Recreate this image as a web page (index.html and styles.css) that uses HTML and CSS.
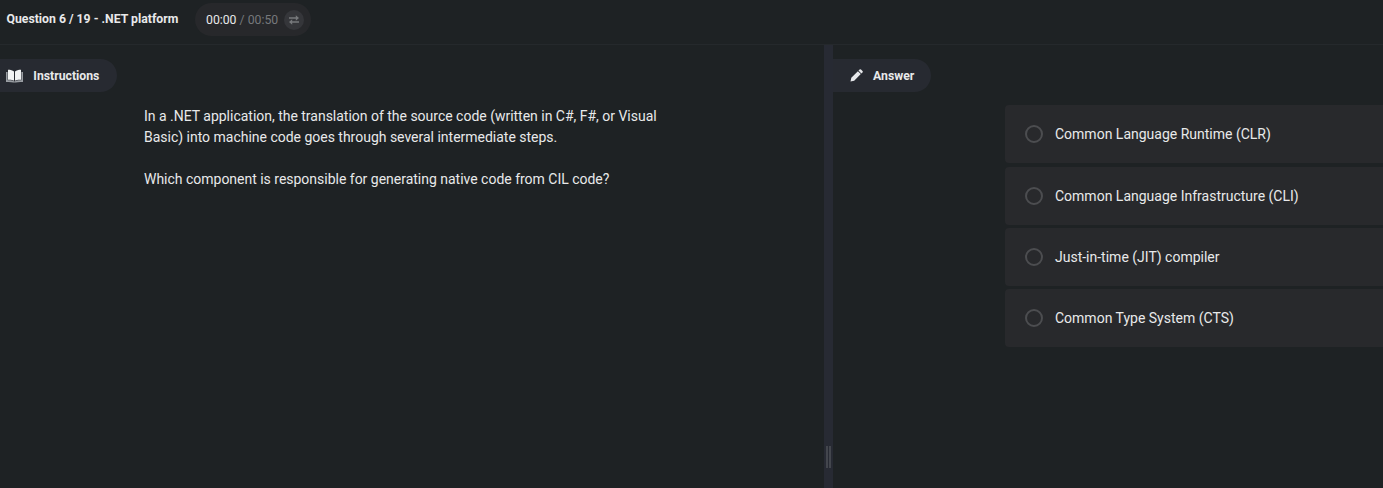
FILE: index.html
```html
<!DOCTYPE html>
<html lang="en">
<head>
<meta charset="utf-8">
<title>.NET platform</title>
<link rel="stylesheet" href="styles.css">
</head>
<body>
<header class="topbar">
  <h1 class="title">Question 6 / 19 - .NET platform</h1>
  <div class="timer">
    <span class="elapsed">00:00</span><span class="total">&nbsp;/ 00:50</span>
    <span class="swap">
      <svg width="10" height="10" viewBox="0 0 10 10" fill="#77797c"><path d="M0 2.300h6.800V.3L10 3 6.800 5.700V3.700H0zM10 6.300H3.200V4.300L0 7l3.200 2.700V7.700H10z"/></svg>
    </span>
  </div>
</header>
<main class="workspace">
  <section class="instructions">
    <div class="tab">
      <svg class="book" width="17" height="14" viewBox="0 0 17 14"><path fill="#9a9ea3" d="M0 3h1.600v8.200c2.600-.2 4.800.1 6.900 1.300 2.100-1.200 4.300-1.500 6.900-1.300V3H17v10c-3-.2-5.500-.1-7.300.5H7.300C5.500 12.900 3 12.800 0 13z"/><path fill="#f1f2f3" d="M2 .800C4.700.800 6.500 1.300 8 2.500v9.300C6.300 10.700 4.500 10.500 2 10.700zM15 .800C12.300.800 10.500 1.300 9 2.500v9.300c1.700-1.100 3.500-1.300 6-1.100z"/></svg>
      <span>Instructions</span>
    </div>
    <div class="prose">
      <p>In a .NET application, the translation of the source code (written in C#, F#, or Visual Basic) into machine code goes through several intermediate steps.</p>
      <p>Which component is responsible for generating native code from CIL code?</p>
    </div>
  </section>
  <div class="splitter"><span class="grip"></span></div>
  <section class="answer">
    <div class="tab">
      <svg class="pencil" width="13" height="13" viewBox="0 0 13 13" fill="#e6e8eb"><path d="M.5 12.600 1.300 8.800 7.900 2.200l2.900 2.900-6.600 6.600zM8.500 1.600 9.600.500q.7-.6 1.400 0l1.500 1.500q.6.700 0 1.400l-1.100 1.100z"/></svg>
      <span>Answer</span>
    </div>
    <div class="options">
      <label class="option"><span class="radio"></span>Common Language Runtime (CLR)</label>
      <label class="option"><span class="radio"></span>Common Language Infrastructure (CLI)</label>
      <label class="option"><span class="radio"></span>Just-in-time (JIT) compiler</label>
      <label class="option"><span class="radio"></span>Common Type System (CTS)</label>
    </div>
  </section>
</main>
</body>
</html>
```
FILE: styles.css
```css
* { box-sizing: border-box; }
body {
  margin: 0;
  height: 488px;
  display: flex;
  flex-direction: column;
  overflow: hidden;
  background: #1e2224;
  color: #e8e9ea;
  font-family: Roboto, "Liberation Sans", sans-serif;
  font-size: 14px;
}
.topbar {
  height: 45px;
  flex: none;
  display: flex;
  align-items: flex-start;
  padding-left: 6.500px;
  border-bottom: 1px solid #25292c;
}
.title {
  margin: 10px 0 0;
  width: 188.500px;
  font-size: 12.250px;
  line-height: 18px;
  font-weight: 700;
  white-space: nowrap;
}
.timer {
  display: flex;
  align-items: center;
  width: 116px;
  height: 33px;
  margin-top: 3px;
  padding-left: 11px;
  border-radius: 17px;
  background: #27282b;
  font-size: 12.250px;
  white-space: nowrap;
}
.total { color: #76787b; }
.swap {
  display: flex;
  align-items: center;
  justify-content: center;
  width: 20px;
  height: 20px;
  margin-left: 6px;
  border-radius: 50%;
  background: #35363a;
}
.workspace { flex: 1; display: flex; }
.instructions { width: 824px; padding-top: 14px; }
.tab {
  display: flex;
  align-items: center;
  height: 33px;
  border-radius: 0 17px 17px 0;
  background: #272a31;
  font-size: 12.250px;
  line-height: 14px;
  font-weight: 700;
}
.instructions .tab { width: 117px; padding-left: 6px; gap: 10.300px; }
.prose {
  width: 525px;
  margin: 14px 0 0 144px;
  line-height: 21px;
  letter-spacing: -0.012px;
}
.prose p { margin: 0 0 21px; }
.splitter {
  width: 9px;
  display: flex;
  align-items: flex-end;
  justify-content: center;
  padding-bottom: 20px;
  background: #272a33;
}
.grip {
  width: 5px;
  height: 22px;
  border: solid #43464d;
  border-width: 0 2px;
}
.answer { flex: 1; padding-top: 14px; }
.answer .tab { width: 98px; padding-left: 17px; gap: 10px; }
.options {
  display: flex;
  flex-direction: column;
  gap: 3.250px;
  margin: 13.400px 0 0 172px;
}
.option {
  display: flex;
  align-items: center;
  height: 58px;
  padding-left: 20px;
  gap: 12px;
  border-radius: 4px 0 0 4px;
  background: #28292c;
}
.radio {
  width: 18px;
  height: 18px;
  border: 2px solid #4c4d50;
  border-radius: 50%;
}
```
